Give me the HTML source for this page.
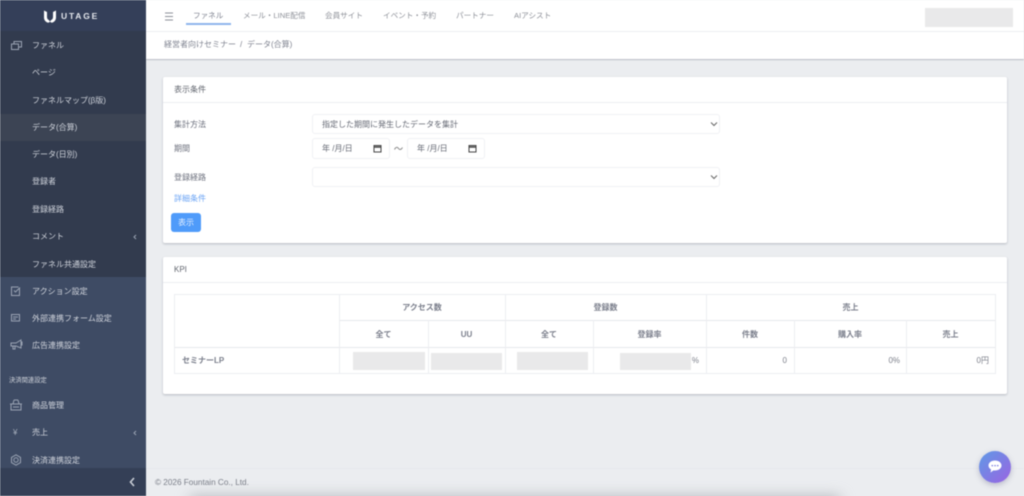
<!DOCTYPE html>
<html lang="ja">
<head>
<meta charset="utf-8">
<title>UTAGE</title>
<style>
*{box-sizing:border-box}
html,body{margin:0;padding:0;width:1024px;height:496px;overflow:hidden;background:#ebedf0}
body{position:relative;font-family:"Liberation Sans","Noto Sans CJK JP",sans-serif;font-size:8px;color:#6b6f7c}
.a{position:absolute;white-space:nowrap}
#wrap{position:absolute;left:0;top:0;width:1024px;height:496px;filter:blur(.4px)}
#side{left:0;top:0;width:146px;height:496px;background:#3e4b64;overflow:hidden}
.s{position:absolute;left:32px;color:#d0d4dc;font-size:8px;line-height:12px;white-space:nowrap}
svg{position:absolute;fill:none;stroke:#9aa3b3;stroke-width:1}
.card{position:absolute;left:163px;width:844px;background:#fff;border-radius:2px;box-shadow:0 1px 2px rgba(60,65,85,.3)}
.inp{position:absolute;background:#fff;border:1px solid #f0f1f4;border-radius:3px;color:#666a75;font-size:8px;line-height:18px}
.ph{position:absolute;background:#e9e9ea}
.l{position:absolute;background:#e6e8ec}
.th{position:absolute;text-align:center;font-weight:bold;font-size:8px;color:#7b7f8c;line-height:12px;white-space:nowrap}
.td{position:absolute;text-align:right;font-size:8px;color:#7d808b;line-height:12px}
.nav{position:absolute;top:10px;color:#8d9098;font-size:7.6px;line-height:12px;white-space:nowrap}
</style>
</head>
<body>
<div id="wrap">
<div id="side" class="a">
  <div class="a" style="left:0;top:0;width:146px;height:31px;background:#343f59"></div>
  <div class="a" style="left:0;top:31px;width:146px;height:246px;background:#323b4e"></div>
  <div class="a" style="left:0;top:114px;width:146px;height:27px;background:#3c4454"></div>
  <svg style="left:44px;top:10px;stroke:none;fill:#fff" width="12" height="13" viewBox="0 0 12 13"><path d="M0 .5L3 2v5c0 1.500.6 2.500 1.800 3L6 11.500 7.200 10C8.400 9.500 9 8.500 9 7V2L12 .5V7.500c0 2.800-2 4.800-4.300 5.300L6 11.800l-1.700 1C2 12.300 0 10.300 0 7.500z"/></svg>
  <div class="a" style="left:61px;top:10px;color:#e4e7ec;font-size:8.5px;font-weight:bold;letter-spacing:1.8px;line-height:12px">UTAGE</div>
  <svg style="left:11px;top:41px" width="11" height="9" viewBox="0 0 11 9"><rect x=".5" y="3" width="7" height="5.500"/><path d="M3 3V.5h7.500V6H7.500"/></svg>
  <div class="s" style="top:40px">ファネル</div>
  <div class="s" style="top:67px">ページ</div>
  <div class="s" style="top:95px">ファネルマップ(β版)</div>
  <div class="s" style="top:122px">データ(合算)</div>
  <div class="s" style="top:149px">データ(日別)</div>
  <div class="s" style="top:176px">登録者</div>
  <div class="s" style="top:204px">登録経路</div>
  <div class="s" style="top:231px">コメント</div>
  <svg style="left:133px;top:234px" width="4" height="6" viewBox="0 0 4 6"><path d="M3 1L1 3l2 2"/></svg>
  <div class="s" style="top:259px">ファネル共通設定</div>
  <svg style="left:11px;top:286px" width="10" height="10" viewBox="0 0 10 10"><path d="M8.500 2.500v7H.5V1H7.500M3 4.500l1.500 1.500L9 1.500"/></svg>
  <div class="s" style="top:286px">アクション設定</div>
  <svg style="left:11px;top:314px" width="10" height="8" viewBox="0 0 10 8"><rect x=".5" y=".5" width="8" height="6.500"/><path d="M2 3h5M2 5h3"/></svg>
  <div class="s" style="top:313px">外部連携フォーム設定</div>
  <svg style="left:10px;top:339px" width="13" height="12" viewBox="0 0 13 12"><path d="M1 4h5l5-3v8L6 7H1zM3 7v3h2V7M11 3h1v3h-1"/></svg>
  <div class="s" style="top:340px">広告連携設定</div>
  <div class="a" style="left:9px;top:376px;color:#cfd3da;font-size:6.3px;line-height:10px">決済関連設定</div>
  <svg style="left:10px;top:399px" width="12" height="12" viewBox="0 0 12 12"><path d="M1 5h10v6H1zM0 5h12M3 5l1-4M9 5L8 1M3 8h6M4 1h4"/></svg>
  <div class="s" style="top:400px">商品管理</div>
  <div class="a" style="left:13px;top:427px;color:#a7afbd;font-size:8px;line-height:12px">¥</div>
  <div class="s" style="top:427px">売上</div>
  <svg style="left:133px;top:430px" width="4" height="6" viewBox="0 0 4 6"><path d="M3 1L1 3l2 2"/></svg>
  <svg style="left:10px;top:454px" width="12" height="12" viewBox="0 0 12 12"><path d="M6 .8l4.500 2.600v5.200L6 11.200 1.500 8.600V3.400z"/><circle cx="6" cy="6" r="2.200"/></svg>
  <div class="s" style="top:455px">決済連携設定</div>
  <div class="a" style="left:0;top:468px;width:146px;height:28px;background:#343f56"></div>
  <svg style="left:129px;top:477px;stroke:#c9ced6;stroke-width:1.600" width="6" height="10" viewBox="0 0 6 10"><path d="M5 1L1.500 5 5 9"/></svg>
</div>

<div class="a" style="left:146px;top:0;width:878px;height:59px;background:#fff;box-shadow:0 1px 1px rgba(70,75,95,.3)"></div>
<div class="l" style="left:146px;top:31px;width:878px;height:1px;background:#eceef2"></div>
<svg style="left:164px;top:12px;stroke:#8d9098" width="10" height="9" viewBox="0 0 10 9"><path d="M1 1h8M1 4.500h8M1 8h8"/></svg>
<div class="nav" style="left:193px;color:#7f8390">ファネル</div>
<div class="a" style="left:186px;top:23px;width:45px;height:1.500px;background:#8fb5ec"></div>
<div class="nav" style="left:243px">メール・LINE配信</div>
<div class="nav" style="left:325px">会員サイト</div>
<div class="nav" style="left:383px">イベント・予約</div>
<div class="nav" style="left:456px">パートナー</div>
<div class="nav" style="left:514px">AIアシスト</div>
<div class="ph" style="left:925px;top:8px;width:88px;height:19px"></div>
<div class="a" style="left:164px;top:39px;line-height:12px;color:#7f8390">経営者向けセミナー</div>
<div class="a" style="left:240px;top:39px;line-height:12px;color:#7f8390">/</div>
<div class="a" style="left:247px;top:39px;line-height:12px;color:#7f8390">データ(合算)</div>

<div class="card" style="top:77px;height:166px"></div>
<div class="a" style="left:174px;top:84px;line-height:12px;color:#62666f">表示条件</div>
<div class="l" style="left:163px;top:102px;width:844px;height:1px;background:#eceef2"></div>
<div class="a" style="left:174px;top:119px;line-height:12px">集計方法</div>
<div class="inp" style="left:312px;top:114px;width:408px;height:20px;padding-left:9px;line-height:19px">指定した期間に発生したデータを集計</div>
<svg style="left:710px;top:121px;stroke:#666" width="8" height="6" viewBox="0 0 8 6"><path d="M1 1.500l3 3 3-3"/></svg>
<div class="a" style="left:174px;top:143px;line-height:12px">期間</div>
<div class="inp" style="left:312px;top:138px;width:78px;height:21px;padding-left:9px;line-height:19px">年 /月/日</div>
<svg style="left:373px;top:144px;stroke:#444" width="9" height="9" viewBox="0 0 9 9"><rect x="1" y="1.500" width="7" height="6.500"/><path d="M1 3h7" stroke-width="1.500"/></svg>
<svg style="left:394px;top:146px;stroke:#888" width="9" height="5" viewBox="0 0 9 5"><path d="M.5 3.500C2 .5 3.500 1 4.500 2.500S7 4 8.500 1.500"/></svg>
<div class="inp" style="left:407px;top:138px;width:78px;height:21px;padding-left:9px;line-height:19px">年 /月/日</div>
<svg style="left:468px;top:144px;stroke:#444" width="9" height="9" viewBox="0 0 9 9"><rect x="1" y="1.500" width="7" height="6.500"/><path d="M1 3h7" stroke-width="1.500"/></svg>
<div class="a" style="left:174px;top:172px;line-height:12px">登録経路</div>
<div class="inp" style="left:312px;top:167px;width:408px;height:20px"></div>
<svg style="left:710px;top:174px;stroke:#666" width="8" height="6" viewBox="0 0 8 6"><path d="M1 1.500l3 3 3-3"/></svg>
<div class="a" style="left:174px;top:193px;line-height:12px;color:#6ea6f5">詳細条件</div>
<div class="a" style="left:171px;top:213px;width:30px;height:19px;background:#4f9bfa;border-radius:3px;color:#e4efff;text-align:center;line-height:19px">表示</div>

<div class="card" style="top:257px;height:137px"></div>
<div class="a" style="left:174px;top:264px;line-height:12px;color:#62666f">KPI</div>
<div class="l" style="left:163px;top:282px;width:844px;height:1px;background:#eceef2"></div>

<div class="l" style="left:174px;top:294px;width:822px;height:1px;background:#eceef2"></div>
<div class="l" style="left:339px;top:320px;width:657px;height:1px"></div>
<div class="l" style="left:174px;top:347px;width:822px;height:1px"></div>
<div class="l" style="left:174px;top:373px;width:822px;height:1px;background:#eceef2"></div>
<div class="l" style="left:174px;top:294px;width:1px;height:80px;background:#eceef2"></div>
<div class="l" style="left:339px;top:294px;width:1px;height:80px;background:#eceef2"></div>
<div class="l" style="left:428px;top:320px;width:1px;height:54px;background:#eceef2"></div>
<div class="l" style="left:505px;top:294px;width:1px;height:80px;background:#eceef2"></div>
<div class="l" style="left:593px;top:320px;width:1px;height:54px;background:#eceef2"></div>
<div class="l" style="left:706px;top:294px;width:1px;height:80px;background:#eceef2"></div>
<div class="l" style="left:794px;top:320px;width:1px;height:54px;background:#eceef2"></div>
<div class="l" style="left:906px;top:320px;width:1px;height:54px;background:#eceef2"></div>
<div class="l" style="left:995px;top:294px;width:1px;height:80px;background:#eceef2"></div>

<div class="th" style="left:339px;top:302px;width:166px">アクセス数</div>
<div class="th" style="left:505px;top:302px;width:201px">登録数</div>
<div class="th" style="left:706px;top:302px;width:289px">売上</div>
<div class="th" style="left:339px;top:329px;width:89px">全て</div>
<div class="th" style="left:428px;top:329px;width:77px">UU</div>
<div class="th" style="left:505px;top:329px;width:88px">全て</div>
<div class="th" style="left:593px;top:329px;width:113px">登録率</div>
<div class="th" style="left:706px;top:329px;width:88px">件数</div>
<div class="th" style="left:794px;top:329px;width:112px">購入率</div>
<div class="th" style="left:906px;top:329px;width:89px">売上</div>
<div class="th" style="left:182px;top:355px;text-align:left">セミナーLP</div>
<div class="ph" style="left:353px;top:352px;width:72px;height:18px"></div>
<div class="ph" style="left:431px;top:353px;width:71px;height:17px"></div>
<div class="ph" style="left:517px;top:352px;width:71px;height:18px"></div>
<div class="ph" style="left:620px;top:353px;width:71px;height:17px"></div>
<div class="td" style="left:680px;top:355px;width:19px">%</div>
<div class="td" style="left:740px;top:355px;width:47px">0</div>
<div class="td" style="left:850px;top:355px;width:50px">0%</div>
<div class="td" style="left:940px;top:355px;width:49px">0円</div>

<div class="l" style="left:146px;top:468px;width:878px;height:1px"></div>
<div class="a" style="left:155px;top:477px;font-size:8.2px;line-height:12px;color:#7a7e88">© 2026 Fountain Co., Ltd.</div>

<div class="a" style="left:979px;top:451px;width:32px;height:32px;border-radius:50%;background:linear-gradient(135deg,#5f9ae6,#9a63e2);box-shadow:0 2px 6px rgba(90,90,130,.35)"></div>
<svg style="left:988px;top:460px;stroke:none" width="14" height="13" viewBox="0 0 14 13"><path fill="#fff" d="M7 .5c3.500 0 6.500 2 6.500 5S10.500 10.500 7 10.500c-.5 0-1 0-1.500-.1L2.500 12.500l.6-3C1.500 8.500.5 7.200.5 5.500.5 2.500 3.500.5 7 .5z"/><path fill="#7b7fe0" d="M3.500 5h1.500v1.300H3.500zM6.300 5h1.500v1.300H6.300zM9 5h1.500v1.300H9z"/></svg>
</div>
<div class="a" style="left:190px;top:497px;width:650px;height:10px;background:#a9acb1;filter:blur(7px)"></div>
</body>
</html>
